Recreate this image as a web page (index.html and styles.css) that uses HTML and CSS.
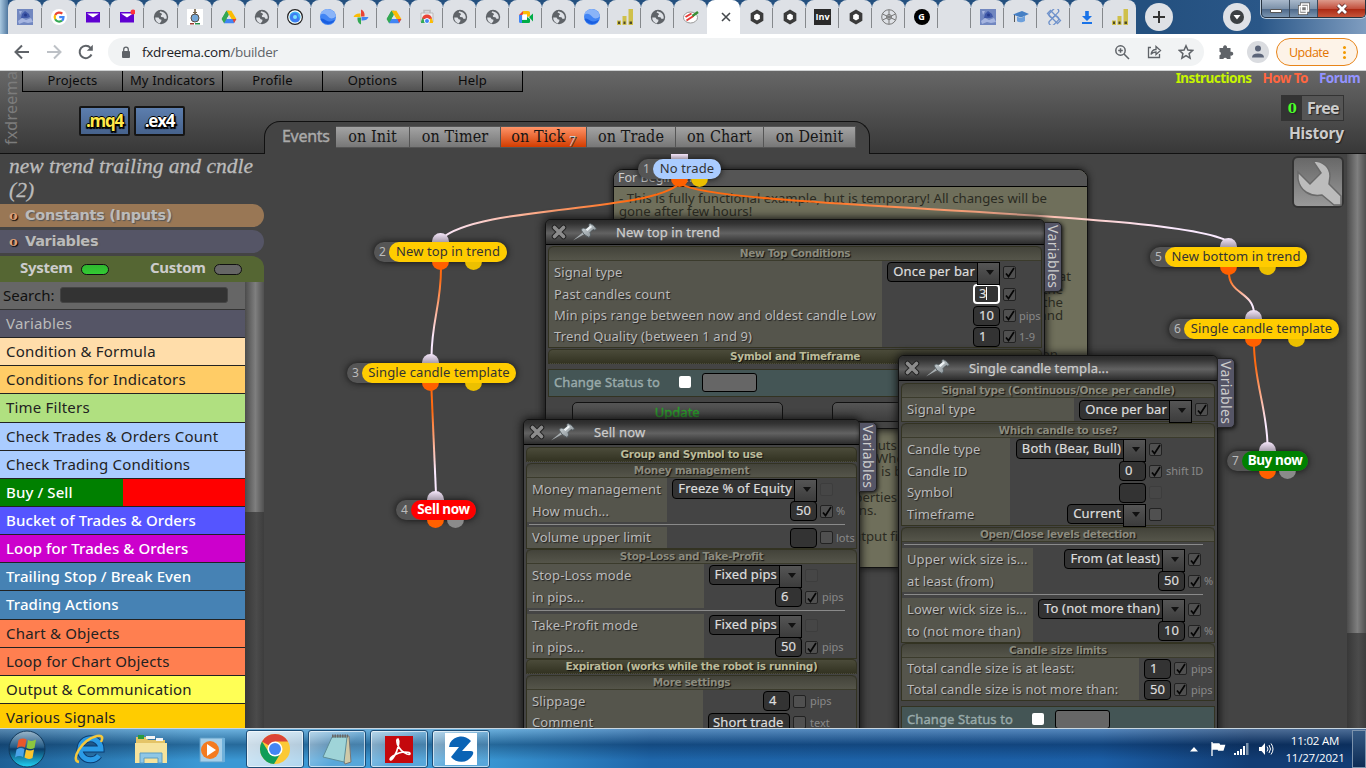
FILE: index.html
```
<!DOCTYPE html>
<html lang="en">
<head>
    <meta charset="UTF-8">
    <title>fxDreema builder</title>
    <link rel="stylesheet" href="styles.css">
</head>
<body>
    <!-- icon sprite -->
    <svg class="sprite" width="0" height="0">
        <defs>
            <linearGradient id="metal" x1="0" y1="0" x2="1" y2="1"><stop offset="0" stop-color="#d5dde0"/><stop offset="1" stop-color="#7d858a"/></linearGradient>
            <linearGradient id="orb" x1="0" y1="0" x2="0" y2="1"><stop offset="0" stop-color="#9db8cc"/><stop offset=".45" stop-color="#235a86"/><stop offset=".5" stop-color="#0b3c68"/><stop offset="1" stop-color="#21d4f5"/></linearGradient>
        </defs>
        <symbol id="globe" viewBox="0 0 16 16"><circle cx="8" cy="8" r="7.2" fill="#5f6368"/><path d="M2.2 8.6h3.3l1.2 1.6 1.8.6-.3 1.6-1.7 2C4 13.7 2 11.500 2.200 8.600zM7.200 2.200l-.6 1.500 1.600.3.800 1.500-1.300 1.300.500 1.200 2.200.3 1.300 1.600 2-.3c.5-3.300-1.600-6.500-6.500-7.400z" fill="#dee1e6"/></symbol>
        <symbol id="photo" viewBox="0 0 16 16"><path fill="#7187c0" d="M0 0h16v16H0z"/><path fill="#3f58a8" d="M5 5l3-3 4 3 1 3-3 1H4z"/><path fill="#a6b5e0" d="M1 12l4-3 4 2 5-2 2 4-5 1-4-1-5 2zM2 2h3l-2 4z"/><circle cx="8.500" cy="6" r="1.500" fill="#263c8c"/></symbol>
        <symbol id="google" viewBox="0 0 16 16"><circle cx="8" cy="8" r="8" fill="#fff"/><g fill="none" stroke-width="2.200"><path stroke="#ea4335" d="M4.200 6A4.600 4.600 0 0 1 11.300 4.700"/><path stroke="#fbbc05" d="M4.200 10.200A4.800 4.800 0 0 1 4.200 6"/><path stroke="#34a853" d="M11 11.700A4.600 4.600 0 0 1 4.200 10.200"/><path stroke="#4285f4" d="M8.200 8.200h4.300c0 1.500-.5 2.700-1.500 3.500"/></g></symbol>
        <symbol id="mail" viewBox="0 0 16 16"><path fill="#5f01d1" d="M1 3h14v10.500H1z"/><path fill="#fff" d="M2 4.500h12L8 8.500z"/></symbol>
        <symbol id="flask" viewBox="0 0 16 16"><path fill="#fff" d="M0 0h16v16H0z"/><path fill="#75644a" d="M7.200 0h1.600v5H7.200zM6 3h4v1H6z"/><circle cx="8" cy="9" r="4" fill="#75a8d8" stroke="#594d42"/><path fill="#a13d35" d="M3 14h4v1.500H3z"/><path fill="#23904b" d="M8 14h5v1.500H8z"/></symbol>
        <symbol id="drive" viewBox="0 0 16 16"><path fill="#34a853" d="M5.400 1.800h2.800L4 14.200.7 10z"/><path fill="#fbbc04" d="M5.400 1.800h5l5 8.200h-5z"/><path fill="#4285f4" d="M3.300 10h12l-2.500 4.200H3z"/><path fill="#34a853" d="M.7 10l2.300 4.200L8 6 5.400 1.800z"/><path fill="#ea4335" d="M11.500 10h3.900l-2.300 3.900z"/><path fill="#dee1e6" d="M8 6l2.400 4H5.600z"/></symbol>
        <symbol id="eye" viewBox="0 0 16 16"><circle cx="8" cy="8" r="7.400" fill="#fff" stroke="#222" stroke-width="1.200"/><circle cx="8" cy="8" r="5.600" fill="#42b4f5"/><path d="M3 9c0-5 5-6 8-4-2 1 3 4 1 7-3 2-7 2-9-3z" fill="#3f7cf2"/><circle cx="8" cy="8" r="2" fill="#7de3fb"/></symbol>
        <symbol id="earth" viewBox="0 0 16 16"><circle cx="8" cy="8" r="8" fill="#4285f4"/><path d="M.3 6C3 3.500 6 5 8 7.500s5 2.500 7.800 0A8 8 0 0 0 5 .6 8 8 0 0 0 .3 6z" fill="#8ab4f8"/><path d="M.5 10c3-2 5.500 3 9 2.500 2-.2 4-1.500 5.500-1.800A8 8 0 0 1 .5 10z" fill="#1a5fe0"/></symbol>
        <symbol id="photos" viewBox="0 0 16 16"><path fill="#ea4335" d="M8 .5v7h3.500Q12 2 8 .5z"/><path fill="#4285f4" d="M15.500 8h-7v3.500Q14 12 15.500 8z"/><path fill="#34a853" d="M8 15.500v-7H4.500Q4 14 8 15.500z"/><path fill="#fbbc04" d="M.5 8h7V4.500Q2 4 .5 8z"/></symbol>
        <symbol id="store" viewBox="0 0 16 16"><path fill="#eee" stroke="#bbb" d="M2 4h12v9H2z"/><path fill="none" stroke="#bbb" stroke-width="1.500" d="M5 4V1.500h6V4"/><path fill="#ea4335" d="M3 10a5 4.500 0 0 1 10 0z"/><path fill="#34a853" d="M2 14c0-3 1-4 2-5l2.500 5z"/><path fill="#fbbc04" d="M14 14c0-3-1-4-2-5l-4 5z"/><circle cx="8" cy="12" r="2.500" fill="#4285f4" stroke="#fff"/></symbol>
        <symbol id="meet" viewBox="0 0 16 16"><path fill="#4285f4" d="M1 6h3v8H2.500Q1 14 1 12.500z"/><path fill="#ea4335" d="M5 2v4H1z"/><path fill="#fbbc04" d="M5 2h5q2 0 2 1.500V7L9 8V5.500H5z"/><path fill="#00ac47" d="M4 11h5V8l3 2v3q0 1-1.500 1H4zM11 8l4-3.500v8z"/><path fill="#fff" d="M4.500 5.500H9v5H4.500z"/></symbol>
        <symbol id="btm" viewBox="0 0 16 16"><path fill="#cfc04a" d="M0 11.500h4V16H0zM5.500 7h4v9h-4zM11.500 0H16v16h-4.500z"/><path fill="#4e4a28" d="M1 12.500h2V15H1zM6.500 12.500h2V15h-2zM12.500 12.500H15V15h-2.500z"/></symbol>
        <symbol id="leaf" viewBox="0 0 16 16"><ellipse cx="7.500" cy="8.500" rx="7" ry="5.500" fill="#fff" stroke="#999"/><path stroke="#e53935" stroke-width="2" fill="none" d="M2.500 8l6-3.500M3.500 11.500l7-4.500"/><path stroke="#3a8e35" stroke-width="2.500" d="M9.500 7L15 3"/></symbol>
        <symbol id="hex" viewBox="0 0 16 16"><path fill="#fff" stroke="#3b3b3b" stroke-width="3.500" d="M8 2.500l4.600 2.700v5.600L8 13.500l-4.600-2.700V5.200z"/></symbol>
        <symbol id="wheel" viewBox="0 0 16 16"><g fill="none" stroke="#777"><circle cx="8" cy="8" r="7.300"/><circle cx="8" cy="8" r="2.500"/><path d="M8 1v14M1.500 5L14.500 11M1.500 11L14.500 5"/></g></symbol>
        <symbol id="hat" viewBox="0 0 16 16"><path fill="#457fc4" d="M0 5.500L9 2l7 3-8 3.500z"/><path fill="#6da0dc" d="M4 7.800v4.500c2 1.500 6 1.200 8-.3V6.800L8 9z"/><path stroke="#555" fill="none" d="M1.500 6v7"/></symbol>
        <symbol id="link" viewBox="0 0 16 16"><g fill="none" stroke="#6f92cb" stroke-width="1.300"><rect x="5" y="-1.500" width="5.500" height="11" rx="2.500" transform="rotate(45 8 4)"/><rect x="5" y="6.500" width="5.500" height="11" rx="2.500" transform="rotate(45 8 12)"/><path d="M1.500 4.500l3-3 10 10-3 3z"/></g></symbol>
        <symbol id="down" viewBox="0 0 16 16"><path fill="#1a73e8" d="M6.200 2h3.600v5H13l-5 5-5-5h3.200zM3 13h10v2H3z"/></symbol>
        <symbol id="tick" viewBox="0 0 13 13"><path d="M3 7.500l2.500 3L11 2" fill="none" stroke="#050505" stroke-width="1.700"/></symbol>
        <symbol id="pin" viewBox="0 0 26 18"><path d="M1 17.500L12.500 8l1.800 2z" fill="#a9b0b3"/><path d="M9 6.500q3-2.500 5-.5l3-2.500q-1-2 1-3 4 1 6.500 5.500-1.500 2-3.500.5l-3 3q2 2.500-1 5Q11 12 9 6.500z" fill="url(#metal)" stroke="#4a5357" stroke-width=".8"/><path d="M13.500 6.500l5-4 1.500 1.500-4.500 4z" fill="#eef3f5"/></symbol>
        <symbol id="close" viewBox="0 0 18 18"><path d="M4.500 4.500l9 9M13.500 4.500l-9 9" stroke="#222" stroke-width="5.500" stroke-linecap="round"/><path d="M4.500 4.500l9 9M13.500 4.500l-9 9" stroke="#8c8c8c" stroke-width="3.600" stroke-linecap="round"/></symbol>
    </svg>

    <div class="tabstrip">
        <div class="tabs">
            <div class="tab wide"><svg><use href="#photo"/></svg></div>
            <div class="tab wide"><svg><use href="#google"/></svg></div>
            <div class="tab wide"><svg><use href="#mail"/></svg></div>
            <div class="tab wide"><svg><use href="#mail"/><circle cx="14" cy="3" r="2.500" fill="#ff333a"/></svg></div>
            <div class="tab wide"><svg><use href="#globe"/></svg></div>
            <div class="tab wide"><svg><use href="#flask"/></svg></div>
            <div class="tab"><svg><use href="#drive"/></svg></div>
            <div class="tab"><svg><use href="#globe"/></svg></div>
            <div class="tab"><svg><use href="#eye"/></svg></div>
            <div class="tab"><svg><use href="#earth"/></svg></div>
            <div class="tab"><svg><use href="#photos"/></svg></div>
            <div class="tab"><svg><use href="#drive"/></svg></div>
            <div class="tab"><svg><use href="#store"/></svg></div>
            <div class="tab"><svg><use href="#globe"/></svg></div>
            <div class="tab"><svg><use href="#globe"/></svg></div>
            <div class="tab"><svg><use href="#meet"/></svg></div>
            <div class="tab"><svg><use href="#globe"/></svg></div>
            <div class="tab"><svg><use href="#earth"/></svg></div>
            <div class="tab"><svg><use href="#btm"/></svg></div>
            <div class="tab"><svg><use href="#globe"/></svg></div>
            <div class="tab before-active"><svg><use href="#leaf"/></svg></div>
            <div class="tab active"><svg><path d="M5 4l8 8M13 4l-8 8" stroke="#45494d" stroke-width="1.600"/></svg></div>
            <div class="tab after-active"><svg><use href="#hex"/></svg></div>
            <div class="tab"><svg><use href="#hex"/></svg></div>
            <div class="tab"><span class="fav-inv">Inv</span></div>
            <div class="tab"><svg><use href="#hex"/></svg></div>
            <div class="tab"><svg><use href="#wheel"/></svg></div>
            <div class="tab"><span class="fav-g">G</span></div>
            <div class="tab"></div>
            <div class="tab"><svg><use href="#photo"/></svg></div>
            <div class="tab"><svg><use href="#hat"/></svg></div>
            <div class="tab"><svg><use href="#link"/></svg></div>
            <div class="tab"><svg><use href="#down"/></svg></div>
            <div class="tab last"><svg><use href="#btm"/></svg></div>
        </div>
        <div class="round-btn"><svg width="28" height="28"><path d="M14 8v12M8 14h12" stroke="#333" stroke-width="2"/></svg></div>
        <div class="round-btn search"><svg width="28" height="28"><circle cx="14" cy="14" r="7" fill="#3c4043"/><path d="M10.500 12h7L14 16.500z" fill="#fff"/></svg></div>
        <div class="win-buttons">
            <span class="wb"><svg width="14" height="12"><path d="M1.500 6.500h11v3h-11z" fill="#fff" stroke="#555"/></svg></span>
            <span class="wb"><svg width="14" height="14"><path d="M4.500 2h7v7h-7zM2.500 4.500h7v7h-7z" fill="none" stroke="#555" stroke-width="3"/><path d="M4.500 2h7v7h-7zM2.500 4.500h7v7h-7z" fill="#777" stroke="#fff" stroke-width="1.500"/></svg></span>
            <span class="wb red"><svg width="14" height="12"><path d="M3 2l8 8M11 2l-8 8" stroke="#5b2a2a" stroke-width="4.500"/><path d="M3 2l8 8M11 2l-8 8" stroke="#fff" stroke-width="2.800"/></svg></span>
        </div>
    </div>

    <div class="toolbar">
        <svg class="nav" viewBox="0 0 16 16"><path d="M15 8H2M8 1.500L1.500 8 8 14.500" fill="none" stroke="#5f6368" stroke-width="2"/></svg>
        <svg class="nav" viewBox="0 0 16 16"><path d="M1 8h13M8 1.500L14.500 8 8 14.500" fill="none" stroke="#bdc1c6" stroke-width="2"/></svg>
        <svg class="nav" viewBox="0 0 16 16"><path d="M13.500 10.500A6.200 6.200 0 1 1 12.500 3.800" fill="none" stroke="#5f6368" stroke-width="2"/><path d="M14.800.8v6h-6z" fill="#5f6368"/></svg>
        <div class="omnibox">
            <svg class="lock" viewBox="0 0 10 13"><rect x="1" y="5" width="8" height="7" rx="1" fill="#5f6368"/><path d="M2.700 5V3.500a2.300 2.300 0 0 1 4.600 0V5" fill="none" stroke="#5f6368" stroke-width="1.300"/></svg>
            <span class="url">fxdreema.com<em>/builder</em></span>
            <svg class="oi" viewBox="0 0 16 16"><g fill="none" stroke="#5f6368" stroke-width="1.500"><circle cx="6.500" cy="6.500" r="4.700"/><path d="M10 10l5 5M4.200 6.500h4.600M6.500 4.200v4.600"/></g></svg>
            <svg class="oi" viewBox="0 0 16 16"><g fill="none" stroke="#5f6368" stroke-width="1.300"><path d="M5 3.500H2.500v10h11V10"/><path d="M5 10.500c.5-3.500 2-5 5-5V2.500l4.500 4-4.500 4V8C7.500 8 6 9 5 10.500z"/></g></svg>
            <svg class="oi" viewBox="0 0 16 16"><path d="M8 1.800l1.900 4.300 4.700.4-3.500 3.100 1 4.600L8 11.700l-4.100 2.500 1-4.600L1.400 6.500l4.700-.4z" fill="none" stroke="#5f6368" stroke-width="1.500"/></svg>
        </div>
        <svg class="puzzle" viewBox="0 0 16 16"><path d="M1.500 4h3.700a2 2 0 1 1 3.700 0h3.600v3.800a2 2 0 1 1 0 3.700V15H9a2 2 0 0 0-3.700 0H1.500v-3.700a1.800 1.800 0 0 0 0-3.500z" fill="#5f6368"/></svg>
        <svg class="avatar" viewBox="0 0 22 22"><circle cx="11" cy="11" r="11" fill="#dadce0"/><circle cx="11" cy="7.500" r="3" fill="#5b6478"/><path d="M5 16.500q0-4 6-4t6 4z" fill="#5b6478"/></svg>
        <div class="update"><span>Update</span><i></i></div>
    </div>

    <div class="app">
        <div class="header">
            <div class="brand">fxdreema</div>
            <div class="header-left">
                <div class="menu"><span>Projects</span><span>My Indicators</span><span>Profile</span><span>Options</span><span>Help</span></div>
                <div class="exports"><span class="export yellow">.mq4</span><span class="export">.ex4</span></div>
            </div>
            <div class="account">
                <div class="links"><span class="l1">Instructions</span><span class="l2">How To</span><span class="l3">Forum</span></div>
                <div class="plan"><b>0</b><span>Free</span></div>
                <div class="history">History</div>
            </div>
            <div class="events">
                <span class="events-title">Events</span>
                <span class="ev" style="width:74px">on Init</span>
                <span class="ev" style="width:91px">on Timer</span>
                <span class="ev on" style="width:86px">on Tick<sub>7</sub></span>
                <span class="ev" style="width:89px">on Trade</span>
                <span class="ev" style="width:88px">on Chart</span>
                <span class="ev" style="width:92px">on Deinit</span>
            </div>
        </div>

        <div class="main">
            <div class="sidebar">
                <div class="project">new trend trailing and cndle (2)</div>
                <div class="side-bar brown"><b>o</b>Constants (Inputs)</div>
                <div class="side-bar slate"><b>o</b>Variables</div>
                <div class="sources"><span>System</span><i class="led on"></i><span class="custom">Custom</span><i class="led"></i></div>
                <div class="side-body">
                    <div class="side-list">
                        <div class="search-row">Search:<span class="search-box"></span></div>
                        <div class="cat c-var">Variables</div>
                        <div class="cat c-cond">Condition &amp; Formula</div>
                        <div class="cat c-ind">Conditions for Indicators</div>
                        <div class="cat c-time">Time Filters</div>
                        <div class="cat c-check">Check Trades &amp; Orders Count</div>
                        <div class="cat c-check">Check Trading Conditions</div>
                        <div class="cat c-buy">Buy / Sell</div>
                        <div class="cat c-bucket">Bucket of Trades &amp; Orders</div>
                        <div class="cat c-loop">Loop for Trades &amp; Orders</div>
                        <div class="cat c-steel">Trailing Stop / Break Even</div>
                        <div class="cat c-steel">Trading Actions</div>
                        <div class="cat c-coral">Chart &amp; Objects</div>
                        <div class="cat c-coral">Loop for Chart Objects</div>
                        <div class="cat c-out">Output &amp; Communication</div>
                        <div class="cat c-sig">Various Signals</div>
                    </div>
                    <div class="scroll"><div class="thumb side-thumb"></div></div>
                </div>
            </div>

            <!-- block diagram: everything on it is placed freely -->
            <div class="canvas">
                <div class="note">
                    <div class="note-head">For Beginners</div>
                    <div class="note-body">
                        <p>- This is fully functional example, but is temporary! All changes will be</p>
                        <p>gone after few hours!</p>
                        <p></p><p></p><p></p><p></p>
                        <p class="end">at</p>
                        <p class="end1">the</p>
                        <p class="end1">the</p>
                        <p class="end1">and</p>
                        <p></p><p></p>
                        <p class="end2">on</p>
                        <p></p><p></p><p></p><p></p><p></p><p></p>
                        <p class="mid">inputs</p>
                        <p class="mid1">. When</p>
                        <p class="mid2">is based</p>
                        <p></p>
                        <p class="mid3">properties</p>
                        <p class="mid4">actions.</p>
                        <p></p>
                        <p class="mid5">output file</p>
                    </div>
                </div>

                <svg class="wires" width="1082" height="574" viewBox="264 154 1082 574">
                    <defs>
                        <linearGradient id="w1" gradientUnits="userSpaceOnUse" x1="678" y1="0" x2="441" y2="0"><stop offset=".2" stop-color="#ff6a10"/><stop offset="1" stop-color="#fbeaff"/></linearGradient>
                        <linearGradient id="w2" gradientUnits="userSpaceOnUse" x1="680" y1="0" x2="1229" y2="0"><stop offset=".2" stop-color="#ff6a10"/><stop offset=".9" stop-color="#fbeaff"/></linearGradient>
                        <linearGradient id="w3" gradientUnits="userSpaceOnUse" x1="0" y1="270" x2="0" y2="354"><stop offset=".1" stop-color="#ff6a10"/><stop offset=".8" stop-color="#fbeaff"/></linearGradient>
                        <linearGradient id="w4" gradientUnits="userSpaceOnUse" x1="0" y1="391" x2="0" y2="492"><stop offset=".2" stop-color="#ff6a10"/><stop offset=".8" stop-color="#fbeaff"/></linearGradient>
                        <linearGradient id="w5" gradientUnits="userSpaceOnUse" x1="0" y1="275" x2="0" y2="311"><stop offset=".1" stop-color="#ff6a10"/><stop offset=".8" stop-color="#fbeaff"/></linearGradient>
                        <linearGradient id="w6" gradientUnits="userSpaceOnUse" x1="0" y1="346" x2="0" y2="443"><stop offset=".2" stop-color="#ff6a10"/><stop offset=".8" stop-color="#fbeaff"/></linearGradient>
                    </defs>
                    <g fill="none" stroke-width="2">
                        <path stroke="url(#w1)" d="M679 184C645 213 480 205 441 239"/>
                        <path stroke="url(#w2)" d="M681 184C720 209 1180 210 1229 242"/>
                        <path stroke="url(#w3)" d="M441 268C441 305 432 320 431.500 356"/>
                        <path stroke="url(#w4)" d="M431.500 390L436 494"/>
                        <path stroke="url(#w5)" d="M1229 273C1229 294 1253 292 1254 313"/>
                        <path stroke="url(#w6)" d="M1254 344C1254 380 1267 410 1267.500 445"/>
                    </g>
                </svg>

                <div class="node n1"><i class="in"></i><span class="num">1</span><span class="name">No trade</span><i class="out"></i><i class="alt"></i></div>
                <div class="node n2"><i class="in"></i><span class="num">2</span><span class="name">New top in trend</span><i class="out"></i><i class="alt"></i></div>
                <div class="node n3"><i class="in"></i><span class="num">3</span><span class="name">Single candle template</span><i class="out"></i><i class="alt"></i></div>
                <div class="node n4"><i class="in"></i><span class="num">4</span><span class="name">Sell now</span><i class="out"></i><i class="alt"></i></div>
                <div class="node n5"><i class="in"></i><span class="num">5</span><span class="name">New bottom in trend</span><i class="out"></i><i class="alt"></i></div>
                <div class="node n6"><i class="in"></i><span class="num">6</span><span class="name">Single candle template</span><i class="out"></i><i class="alt"></i></div>
                <div class="node n7"><i class="in"></i><span class="num">7</span><span class="name">Buy now</span><i class="out"></i><i class="alt"></i></div>

                <div class="window win-top">
                    <div class="vars">Variables</div>
                    <div class="titlebar"><svg class="x"><use href="#close"/></svg><svg class="pin"><use href="#pin"/></svg><span>New top in trend</span></div>
                    <div class="section s-top">
                        <h4>New Top Conditions</h4>
                        <div class="row"><label>Signal type</label><span class="sel">Once per bar</span><span class="chk"><svg><use href="#tick"/></svg></span><em></em></div>
                        <div class="row"><label>Past candles count</label><span class="inp focus">3</span><span class="chk"><svg><use href="#tick"/></svg></span><em></em></div>
                        <div class="row short"><label>Min pips range between now and oldest candle Low</label><span class="inp">10</span><span class="chk"><svg><use href="#tick"/></svg></span><em>pips</em></div>
                        <div class="row short"><label>Trend Quality (between 1 and 9)</label><span class="inp">1</span><span class="chk"><svg><use href="#tick"/></svg></span><em>1-9</em></div>
                    </div>
                    <h4 class="fold">Symbol and Timeframe</h4>
                    <div class="status">Change Status to<i class="box"></i><i class="field"></i></div>
                    <div class="buttons"><span class="green">Update</span><span></span></div>
                </div>

                <div class="window win-sell">
                    <div class="vars">Variables</div>
                    <div class="titlebar"><svg class="x"><use href="#close"/></svg><svg class="pin"><use href="#pin"/></svg><span>Sell now</span></div>
                    <h4 class="fold">Group and Symbol to use</h4>
                    <div class="section s-money">
                        <h4>Money management</h4>
                        <div class="row"><label>Money management</label><span class="sel">Freeze % of Equity</span><span class="chk faint"></span><em></em></div>
                        <div class="row"><label>How much...</label><span class="inp">50</span><span class="chk"><svg><use href="#tick"/></svg></span><em>%</em></div>
                        <hr>
                        <div class="row short"><label>Volume upper limit</label><span class="inp"></span><span class="chk"></span><em>lots</em></div>
                    </div>
                    <div class="section s-stop">
                        <h4>Stop-Loss and Take-Profit</h4>
                        <div class="row"><label>Stop-Loss mode</label><span class="sel">Fixed pips</span><span class="chk faint"></span><em></em></div>
                        <div class="row"><label>in pips...</label><span class="inp">6</span><span class="chk"><svg><use href="#tick"/></svg></span><em>pips</em></div>
                        <hr>
                        <div class="row"><label>Take-Profit mode</label><span class="sel">Fixed pips</span><span class="chk faint"></span><em></em></div>
                        <div class="row"><label>in pips...</label><span class="inp">50</span><span class="chk"><svg><use href="#tick"/></svg></span><em>pips</em></div>
                    </div>
                    <h4 class="fold">Expiration (works while the robot is running)</h4>
                    <div class="section s-more">
                        <h4>More settings</h4>
                        <div class="row"><label>Slippage</label><span class="inp">4</span><span class="chk"></span><em>pips</em></div>
                        <div class="row short"><label>Comment</label><span class="inp text">Short trade</span><span class="chk"></span><em>text</em></div>
                    </div>
                </div>

                <div class="window win-candle">
                    <div class="vars">Variables</div>
                    <div class="titlebar"><svg class="x"><use href="#close"/></svg><svg class="pin"><use href="#pin"/></svg><span>Single candle templa...</span></div>
                    <div class="section s-signal">
                        <h4>Signal type (Continuous/Once per candle)</h4>
                        <div class="row tall"><label>Signal type</label><span class="sel">Once per bar</span><span class="chk"><svg><use href="#tick"/></svg></span><em></em></div>
                    </div>
                    <div class="section s-which">
                        <h4>Which candle to use?</h4>
                        <div class="row"><label>Candle type</label><span class="sel">Both (Bear, Bull)</span><span class="chk"><svg><use href="#tick"/></svg></span><em></em></div>
                        <div class="row"><label>Candle ID</label><span class="inp">0</span><span class="chk"><svg><use href="#tick"/></svg></span><em>shift ID</em></div>
                        <div class="row short"><label>Symbol</label><span class="inp"></span><span class="chk faint"></span><em></em></div>
                        <div class="row"><label>Timeframe</label><span class="sel">Current</span><span class="chk"></span><em></em></div>
                    </div>
                    <div class="section s-open">
                        <h4>Open/Close levels detection</h4>
                        <hr>
                        <div class="row"><label>Upper wick size is...</label><span class="sel">From (at least)</span><span class="chk"><svg><use href="#tick"/></svg></span><em></em></div>
                        <div class="row"><label>at least (from)</label><span class="inp">50</span><span class="chk"><svg><use href="#tick"/></svg></span><em>%</em></div>
                        <hr>
                        <div class="row"><label>Lower wick size is...</label><span class="sel">To (not more than)</span><span class="chk"><svg><use href="#tick"/></svg></span><em></em></div>
                        <div class="row"><label>to (not more than)</label><span class="inp">10</span><span class="chk"><svg><use href="#tick"/></svg></span><em>%</em></div>
                    </div>
                    <div class="section s-limits">
                        <h4>Candle size limits</h4>
                        <div class="row short"><label>Total candle size is at least:</label><span class="inp">1</span><span class="chk"><svg><use href="#tick"/></svg></span><em>pips</em></div>
                        <div class="row short"><label>Total candle size is not more than:</label><span class="inp">50</span><span class="chk"><svg><use href="#tick"/></svg></span><em>pips</em></div>
                    </div>
                    <div class="status">Change Status to<i class="box"></i><i class="field"></i></div>
                </div>

                <div class="wrench"><svg width="48" height="48"><path d="M19 3C30 3 36 10 36 18l-1 8 12 12v9h-7L28 37C16 39 6 33 4 21v-7l12 12 11-11z" fill="#bcbcbc" stroke="#6a6a6a" stroke-width="1.500"/></svg></div>
            </div>
            <div class="scroll"><div class="thumb main-thumb"></div></div>
        </div>
    </div>

    <div class="taskbar">
        <svg class="start" viewBox="0 0 38 38"><circle cx="19" cy="19" r="18" fill="url(#orb)" stroke="#123a5c"/><path d="M10.500 10q4-2.500 8-.5l-1.500 8q-4-2-8 .5z" fill="#e8582c"/><path d="M20 10q4 2 8-.5l-1.500 8.500q-4 2-8 0z" fill="#8cc63f"/><path d="M8.500 19.500q4-2.500 8-.5l-1.500 8q-4-2-8 .5z" fill="#4aa3e8"/><path d="M18 19.500q4 2 8 0L24.500 28q-4 2-8-.5z" fill="#fbc52d"/></svg>
        <svg class="ti" viewBox="0 0 34 34"><g fill="none"><path d="M27 23.500A10.500 10.500 0 1 1 29 17H10" stroke="#0b3d73" stroke-width="7"/><path d="M27 23.500A10.500 10.500 0 1 1 29 17H10" stroke="#2b9be6" stroke-width="5"/><path d="M7 30C-2 29 9 8 25 4c6-1 6 2 4 6" stroke="#f5c83c" stroke-width="2.500"/></g></svg>
        <svg class="ti" viewBox="0 0 34 34"><path d="M2 5h10l2 3h17v22H2z" fill="#e4c467"/><path d="M4 3h6v4H4z" fill="#2a9a3f"/><path d="M12 4h9v3h-9zM22 6h7v3h-7z" fill="#f4f4f4"/><path d="M1 11h32v20H1z" fill="#f6e39c"/><path d="M6 31v-10h22v10h-4v-5H10v5z" fill="#8fc7e6" stroke="#5c9ec4"/></svg>
        <svg class="ti" viewBox="0 0 34 34"><path d="M4 6h24v24H4z" fill="#a6cfe9" stroke="#5e9fc9"/><path d="M26 6h3v24h-3z" fill="#6fb0da"/><circle cx="14" cy="18" r="9" fill="#f47b20"/><path d="M11 12l9 6-9 6z" fill="#fff"/></svg>
        <div class="task current"><svg viewBox="0 0 32 32"><circle cx="16" cy="16" r="15" fill="#fbc936"/><path d="M16 16L3 8.500A15 15 0 0 1 29 8.500H16z" fill="#db4437"/><path d="M3 8.500A15 15 0 0 0 15 31l7-11.500-12 0z" fill="#0f9d58"/><circle cx="16" cy="16" r="7.500" fill="#fff"/><circle cx="16" cy="16" r="6" fill="#4285f4"/></svg></div>
        <div class="task"><svg viewBox="0 0 32 32"><path d="M12 3h16l2 26-6 2z" fill="#cfc9a8" stroke="#777"/><path d="M11 4h15l-3 25-21-5z" fill="#9fd4d8" stroke="#5e8d98"/><path d="M11 3h16" stroke="#666" stroke-width="3" stroke-dasharray="1.500 1"/></svg></div>
        <div class="task"><svg viewBox="0 0 32 32"><path d="M2 3h28v27H2z" fill="#c4080d"/><path d="M15 6q-2 0-.5 5.500Q17 18 24 21q3 1 3-.5t-5-1.500q-6 0-12 4-4 3-2.500 4 2 0 6-8Q17 9 15 6z" fill="none" stroke="#fff" stroke-width="1.700"/></svg></div>
        <div class="task"><svg viewBox="0 0 32 32"><path d="M0 0h32v32H0z" fill="#fff"/><path d="M5 10A13 13 0 0 1 26 8L17 18h9q4 0 1 5A13 13 0 0 1 6 24l8-10H4z" fill="#0a63b5"/></svg></div>
        <div class="tray">
            <svg width="10" height="8"><path d="M1 6.500L5 2l4 4.500z" fill="#fff"/></svg>
            <svg class="flag" width="16" height="16"><path d="M2 1v14M3 3h6l1 1.500h4.500L13 9H8.500L8 8H3z" stroke="#fff" stroke-width="1.300" fill="#fff"/></svg>
            <svg width="16" height="14"><path d="M0 11h2v2H0zM3 9h2v4H3zM6 7h2v6H6zM9 4h2v9H9z" fill="#fff"/><path d="M12 1h2.500v12H12z" fill="#7d94ad"/></svg>
            <svg width="16" height="16"><path d="M1 6h2.500L7 2v12l-3.500-4H1z" fill="#fff"/><path d="M9 5.500q2 2.500 0 5M11 4q3 4 0 8M13 2.500q4 5.500 0 11" fill="none" stroke="#fff"/></svg>
            <div class="clock">11:02 AM<br>11/27/2021</div>
            <div class="peek"></div>
        </div>
    </div>
</body>
</html>
```
FILE: styles.css
```
* {
    box-sizing: border-box;
}
body {
    margin: 0;
    width: 1366px;
    height: 768px;
    overflow: hidden;
    display: flex;
    flex-direction: column;
    font-family: "Noto Sans", sans-serif;
    background: #444;
}
.sprite {
    position: absolute;
}
i, em {
    font-style: normal;
}

/* browser */
.tabstrip {
    height: 34px;
    display: flex;
    flex-shrink: 0;
    padding-left: 8px;
    background: linear-gradient(90deg, #a9c8e0 0, #24507f 12px, #24507f 1150px, #2a5788 1260px, #7f9dc0 1366px);
}
.tabs {
    display: flex;
    background: #24507f;
}
.tab {
    width: 33px;
    height: 34px;
    background: #dee1e6;
    border-radius: 8px 8px 0 0;
    display: flex;
    align-items: center;
    justify-content: center;
    background-image: linear-gradient(#85888c, #85888c);
    background-size: 1px 20px;
    background-position: right 8px;
    background-repeat: no-repeat;
}
.tab.wide {
    width: 34px;
}
.tab svg {
    width: 16px;
    height: 16px;
}
.tab.active {
    background: #fff;
    padding-left: 2px;
}
.tab.before-active {
    background: #dee1e6;
}
.tab.last {
    background-image: none;
}
.fav-inv, .fav-g {
    width: 17px;
    height: 16px;
    background: #2a2a2a;
    color: #fff;
    font: bold 9px/16px "Open Sans", sans-serif;
    text-align: center;
}
.fav-g {
    width: 16px;
    border-radius: 50%;
    background: #000;
}
.round-btn {
    width: 28px;
    height: 28px;
    margin: 3px 0 0 9px;
    border-radius: 50%;
    background: #dee1e6;
}
.round-btn.search {
    margin-left: 50px;
}
.win-buttons {
    display: flex;
    height: 18px;
    margin-left: 10px;
    border: 1px solid #26323f;
    border-top: 0;
    border-radius: 0 0 5px 5px;
    overflow: hidden;
    box-shadow: 0 0 0 1px #b9cadb;
}
.wb {
    width: 28px;
    display: flex;
    align-items: center;
    justify-content: center;
    background: linear-gradient(#a9b9cb, #7d92aa 50%, #4b6687 51%, #7a94b0);
    border-right: 1px solid #3a4a5c;
}
.wb.red {
    width: 47px;
    border: 0;
    background: linear-gradient(#dd9a8b, #c3513f 50%, #a92611 51%, #c6553a);
}
.toolbar {
    height: 36px;
    flex-shrink: 0;
    display: flex;
    align-items: center;
    background: #fff;
    padding-left: 14px;
}
.nav {
    width: 16px;
    height: 16px;
    margin-right: 16px;
}
.omnibox {
    width: 1096px;
    height: 28px;
    margin-left: -2px;
    padding: 0 9px 0 13px;
    border-radius: 14px;
    background: #f1f3f4;
    display: flex;
    align-items: center;
}
.lock {
    width: 10px;
    height: 13px;
}
.url {
    flex: 1;
    margin-left: 11px;
    font: 13.500px "Open Sans", sans-serif;
    letter-spacing: -.25px;
    color: #202124;
}
.url em {
    color: #5f6368;
}
.oi {
    width: 16px;
    height: 16px;
    margin-left: 16px;
}
.oi:last-child {
    margin-right: 1px;
}
.puzzle {
    width: 16px;
    height: 16px;
    margin-left: 14px;
}
.avatar {
    width: 22px;
    height: 22px;
    margin-left: 13px;
}
.update {
    width: 82px;
    height: 28px;
    margin-left: 7px;
    border: 1px solid #e8851a;
    border-radius: 14px;
    background: #fdf3e8;
    color: #e37400;
    font: 12.500px "Open Sans", sans-serif;
    letter-spacing: -.5px;
    display: flex;
    align-items: center;
    justify-content: space-between;
    padding: 0 11px 0 12px;
}
.update i {
    width: 3px;
    height: 3px;
    border-radius: 50%;
    background: #f29900;
    box-shadow: 0 -5px #f29900, 0 5px #f29900;
}

/* app header */
.app {
    height: 658px;
    border-top: 1px solid #cfd1d2;
    display: flex;
    flex-direction: column;
}
.header {
    height: 83px;
    position: relative;
    display: flex;
    flex-shrink: 0;
    background: linear-gradient(#676767, #383838);
    border-bottom: 1px solid #111;
}
.brand {
    width: 22px;
    writing-mode: vertical-rl;
    transform: rotate(180deg);
    text-align: right;
    color: #7c7c7c;
    font-size: 16px;
    line-height: 22px;
    letter-spacing: .3px;
}
.header-left {
    width: 502px;
}
.menu {
    display: flex;
    height: 21px;
    border-left: 1px solid #000;
}
.menu span {
    width: 100px;
    border-right: 1px solid #000;
    border-bottom: 1px solid #000;
    background: linear-gradient(#7b7b7b, #515151);
    color: #0b0b0b;
    font-size: 13px;
    letter-spacing: .15px;
    line-height: 19px;
    text-align: center;
}
.exports {
    display: flex;
    gap: 4px;
    padding: 14px 0 0 57px;
}
.export {
    width: 51px;
    height: 30px;
    border: 2px solid #151515;
    border-radius: 2px;
    background: linear-gradient(#5c7eae, #46628c);
    color: #fff;
    font: bold 17px/25px "Open Sans", sans-serif;
    letter-spacing: -1.2px;
    text-align: center;
    text-shadow: 1px 0 #000, -1px 0 #000, 0 1px #000, 0 -1px #000, 2px 2px 1px #000, -1px 2px 1px #000;
}
.export.yellow {
    color: #ffe94a;
}
.account {
    margin-left: auto;
    padding-right: 6px;
    display: flex;
    flex-direction: column;
    align-items: flex-end;
    font-weight: bold;
}
.links {
    display: flex;
    gap: 11px;
    font-size: 13.500px;
    line-height: 15px;
    letter-spacing: -.55px;
}
.l1 { color: #c6f500; }
.l2 { color: #ff6640; }
.l3 { color: #9393ff; }
.plan {
    width: 63px;
    height: 26px;
    margin: 9px 16px 0 0;
    border: 1px solid #333;
    background: #555;
    display: flex;
    color: #ccc;
    font-size: 16px;
    letter-spacing: -.7px;
    line-height: 24px;
    text-shadow: 1px 1px 1px #222;
}
.plan b {
    width: 20px;
    margin-right: 5px;
    background: #333;
    color: #4aff2a;
    font: bold 13px/25px "DejaVu Serif", serif;
    text-align: center;
}
.history {
    margin: 2px 16px 0 0;
    color: #ccc;
    font-size: 15.500px;
    line-height: 21px;
    letter-spacing: -.2px;
    text-shadow: 1px 1px 1px #222;
}
.events {
    position: absolute;
    left: 264px;
    top: 50px;
    width: 606px;
    height: 33px;
    padding: 4px 0 0 17px;
    display: flex;
    background: #444;
    border: 1px solid #111;
    border-bottom: 0;
    border-radius: 16px 16px 0 0;
}
.events-title {
    width: 54px;
    color: #aaa;
    font-size: 16px;
    line-height: 20px;
    letter-spacing: -.3px;
    -webkit-text-stroke: .4px #aaa;
}
.ev {
    height: 22px;
    background: linear-gradient(#a3a3a3, #777);
    border: 1px solid #555;
    border-left-width: 0;
    color: #161616;
    font: 16px/19px "DejaVu Serif Condensed", "DejaVu Serif", serif;
    font-stretch: condensed;
    letter-spacing: .1px;
    text-align: center;
    white-space: nowrap;
}
.ev.on {
    background: linear-gradient(#ff9468, #d23c00);
}
.ev sub {
    font-size: 13px;
    font-style: italic;
    line-height: 10px;
    vertical-align: -4px;
    margin-left: 3px;
    color: #ccc;
    text-shadow: 1px 1px #333;
}

/* sidebar */
.main {
    display: flex;
    height: 574px;
}
.sidebar {
    width: 264px;
    height: 574px;
    overflow: hidden;
    display: flex;
    flex-direction: column;
    flex-shrink: 0;
}
.project {
    height: 50px;
    flex-shrink: 0;
    padding: 0 5px 0 9px;
    color: #bbb;
    font: italic 21.500px/24px "Liberation Serif", serif;
    -webkit-text-stroke: .3px #bbb;
}
.side-bar {
    height: 23px;
    margin-bottom: 3px;
    flex-shrink: 0;
    padding-left: 9px;
    border-radius: 0 12px 12px 0;
    color: #bbb;
    font: bold 14.500px/23px "DejaVu Sans", sans-serif;
    letter-spacing: -.3px;
    text-shadow: 1px 1px 1px #555;
}
.side-bar b {
    display: inline-block;
    width: 16px;
    color: #dc9f78;
    text-shadow: 1px 1px 1px #000;
    font-size: 13px;
    font-family: "DejaVu Serif", serif;
}
.brown { background: #997755; }
.slate { background: #555566; }
.sources {
    height: 26px;
    flex-shrink: 0;
    padding-left: 20px;
    border-radius: 0 12px 0 0;
    display: flex;
    align-items: center;
    background: #556633;
    color: #ccc;
    font-weight: bold;
    font-size: 15px;
    letter-spacing: -.3px;
}
.sources span {
    width: 61px;
    line-height: 22px;
    height: 26px;
}
.sources .custom {
    width: 64px;
    margin-left: 41px;
}
.led {
    width: 28px;
    height: 11px;
    border: 1px solid #111;
    border-radius: 6px;
    background: #666;
}
.led.on {
    background: linear-gradient(#2fb72f, #3c3);
}
.side-body {
    flex: 1;
    display: flex;
}
.side-list {
    width: 245px;
}
.search-row {
    height: 28px;
    background: #666;
    border-bottom: 1px solid #333;
    padding: 0 0 2px 3px;
    font-size: 15px;
    color: #111;
    display: flex;
    align-items: center;
}
.search-box {
    width: 168px;
    height: 16px;
    margin-left: 5px;
    border-radius: 3px;
    background: #333;
    border: 1px solid #444;
}
.cat {
    height: 28.150px;
    padding-left: 6px;
    border-bottom: 1px solid #222;
    color: #222;
    font-size: 15px;
    letter-spacing: .2px;
    line-height: 27px;
    white-space: nowrap;
}
.c-var { background: #555566; color: #bbb; }
.c-cond { background: #ffddaa; }
.c-ind { background: #ffcc66; }
.c-time { background: #b0e080; }
.c-check { background: #aaccff; }
.c-buy { background: linear-gradient(90deg, #008000 50%, #f00 50%); color: #fff; }
.c-bucket { background: #5555ff; color: #fff; }
.c-loop { background: #cc00cc; color: #fff; }
.c-steel { background: #4682b4; color: #fff; }
.c-coral { background: #ff7f50; }
.c-out { background: #ffff55; }
.c-sig { background: #ffcc00; }
.c-bucket, .c-loop, .c-steel, .c-buy { font-weight: 500; letter-spacing: .1px; }
.scroll {
    width: 19px;
    background: linear-gradient(90deg, #383838, #4b4b4b 60%, #3d3d3d);
}
.thumb {
    background: linear-gradient(90deg, #4c4c4c, #7f7f7f 55%, #505050);
}
.side-thumb { height: 230px; }
.main-thumb { height: 479px; }

/* canvas */
.canvas {
    position: relative;
    width: 1083px;
    height: 574px;
    overflow: hidden;
    background: #444;
}
.note {
    position: absolute;
    left: 349px;
    top: 15px;
    width: 475px;
    height: 399px;
    border: 1px solid #111;
    border-radius: 10px 10px 0 0;
    background: #6f6f5b;
    box-shadow: 0 0 7px #111;
    overflow: hidden;
}
.note-head {
    height: 17px;
    padding-left: 4px;
    background: #555;
    border-bottom: 1px solid #000;
    color: #ccc;
    font-size: 12.500px;
    line-height: 16px;
}
.note-body {
    padding: 4px 5px;
    color: #2b2b22;
    font-size: 13.200px;
}
.note p {
    margin: 0;
    height: 13px;
    line-height: 14px;
    white-space: nowrap;
}
.note .end { padding-right: 11px; text-align: right; }
.note .end1 { padding-right: 19px; text-align: right; }
.note .end2 { padding-right: 24px; text-align: right; }
.note .mid { padding-left: 239px; }
.note .mid1 { padding-left: 250px; }
.note .mid2 { padding-left: 262px; }
.note .mid3 { padding-left: 214px; }
.note .mid4 { padding-left: 210px; }
.note .mid5 { padding-left: 226px; }
.wires {
    position: absolute;
    left: 0;
    top: 0;
}
.node {
    position: absolute;
    height: 20px;
    display: flex;
    border-radius: 10px;
    background: #555;
    box-shadow: 0 0 7px #111;
}
.num {
    width: 15px;
    padding-left: 5px;
    color: #bbb;
    font-size: 12px;
    line-height: 19px;
}
.name {
    z-index: 1;
    flex: 1;
    border-radius: 10px;
    background: #ffcc00;
    color: #333;
    font-size: 13px;
    letter-spacing: .1px;
    line-height: 19px;
    text-align: center;
    white-space: nowrap;
}
.node i {
    position: absolute;
    width: 17px;
    height: 9px;
}
.node .in {
    top: -9px;
    background: linear-gradient(#f5e6fa, #a79dac);
    border-radius: 9px 9px 0 0;
}
.node .out, .node .alt {
    bottom: -8px;
    background: #ff6000;
    border-radius: 0 0 9px 9px;
}
.node .alt {
    background: #ecc000;
}
.n1 { left: 374px; top: 5px; width: 83px; }
.n1 .in { top: -5px; height: 5px; border-radius: 0; }
.n1 .in, .n1 .out { left: 33px; }
.n1 .alt { left: 53px; }
.n1 .name { background: #aaccff; }
.n2 { left: 110px; top: 88px; width: 133px; }
.n2 .in, .n2 .out { left: 58px; }
.n2 .alt { left: 91px; }
.n3 { left: 83px; top: 209px; width: 169px; }
.n3 .in, .n3 .out { left: 75px; }
.n3 .alt { left: 118px; }
.n4 { left: 132px; top: 346px; width: 80px; }
.n4 .in, .n4 .out { left: 31px; }
.n4 .alt { left: 51px; }
.n5 { left: 886px; top: 93px; width: 157px; }
.n5 .in, .n5 .out { left: 70px; }
.n5 .alt { left: 109px; }
.n6 { left: 905px; top: 165px; width: 170px; }
.n6 .in, .n6 .out { left: 76px; }
.n6 .alt { left: 119px; }
.n7 { left: 963px; top: 297px; width: 81px; }
.n7 .in, .n7 .out { left: 32px; }
.n7 .alt { left: 52px; }
.n4 .name, .n7 .name { color: #fff; font-size: 13.500px; font-weight: bold; letter-spacing: -.4px; }
.n4 .name { background: #f00; }
.n7 .name { background: #008000; }
.n4 .alt, .n7 .alt { background: #8a8a8a; }

/* block settings windows */
.window {
    position: absolute;
    padding: 0 2px;
    background: #444;
    border: 1px solid #111;
    border-radius: 6px 6px 0 0;
    box-shadow: 0 0 8px 1px #111;
}
.win-top { left: 281px; top: 65px; width: 500px; height: 210px; }
.win-sell { left: 259px; top: 265px; width: 337px; height: 400px; }
.win-candle { left: 634px; top: 201px; width: 320px; height: 400px; }
.vars {
    position: absolute;
    left: 100%;
    top: 2px;
    width: 18px;
    height: 70px;
    border: 1px solid #222;
    border-radius: 0 5px 5px 0;
    background: #555566;
    color: #ccc;
    font-size: 14px;
    line-height: 16px;
    letter-spacing: .35px;
    writing-mode: vertical-rl;
    text-align: center;
    box-shadow: 1px 1px 4px #111;
}
.titlebar {
    height: 25px;
    margin: 0 -2px 2px;
    padding-left: 4px;
    display: flex;
    align-items: center;
    border-bottom: 1px solid #000;
    border-radius: 5px 5px 0 0;
    background: linear-gradient(#2b2b2b, #333 15%, #626262 55%, #2b2b2b);
    color: #ccc;
    font-size: 13px;
    letter-spacing: .1px;
    -webkit-text-stroke: .25px #ccc;
}
.win-top .titlebar {
    margin-bottom: 1px;
}
.titlebar .x {
    width: 18px;
    height: 18px;
}
.titlebar .pin {
    width: 26px;
    height: 18px;
    margin: -1px 18px 0 4px;
}
.titlebar span {
    line-height: 22px;
}
.section {
    border: 1px solid #333322;
    border-top: 0;
    border-radius: 5px 5px 0 0;
    margin-bottom: 1px;
}
.s-money, .s-stop, .s-open, .s-limits {
    margin-bottom: 0;
}
h4 {
    margin: 0;
    height: 15px;
    border-bottom: 1px solid #3b3b2c;
    border-top: 1px solid #333322;
    border-radius: 5px 5px 0 0;
    background: linear-gradient(#43433a, #55554a);
    color: #8b8b7e;
    font: bold 10.500px/13px "DejaVu Sans", sans-serif;
    letter-spacing: -.33px;
    text-align: center;
    text-shadow: 1px 1px 1px #111;
}
h4.fold {
    border: 1px solid #333322;
    border-bottom-style: dotted;
    margin-bottom: 1px;
    background: linear-gradient(#4b4b3a, #333322);
    color: #bbbb99;
}
.row {
    height: 22px;
    display: flex;
    align-items: center;
}
.row.short { height: 21px; }
.row.tall { height: 23px; }
.row label {
    align-self: stretch;
    margin-right: auto;
    padding-left: 5px;
    display: flex;
    align-items: center;
    background: #55554c;
    color: #bbb;
    font-size: 13px;
    white-space: nowrap;
    text-shadow: 1px 1px 1px #222;
    letter-spacing: .12px;
    padding-bottom: 1px;
}
.sel, .inp {
    height: 20px;
    border: 1px solid #000;
    border-radius: 4px;
    background: #333;
    color: #ddd;
    font-size: 13px;
    line-height: 17px;
    white-space: nowrap;
}
.sel {
    padding: 0 24px 0 5px;
    position: relative;
    letter-spacing: .15px;
    -webkit-text-stroke: .2px #ddd;
}
.sel::after {
    content: "";
    position: absolute;
    right: -1px;
    top: -1px;
    width: 21px;
    height: 21px;
    border: 1px solid #000;
    background: linear-gradient(#555, #3c3c3c);
}
.sel::before {
    content: "";
    position: absolute;
    z-index: 1;
    right: 5px;
    top: 7px;
    border: 4.500px solid transparent;
    border-top: 5px solid #111;
    border-bottom: 0;
}
.inp {
    width: 27px;
    padding-left: 5px;
    -webkit-text-stroke: .2px #ddd;
}
.inp.text { width: 82px; padding-left: 4px; letter-spacing: .15px; }
.inp.focus {
    border: 2px solid #fff;
    line-height: 15px;
    padding-left: 4px;
}
.inp.focus::after {
    content: "";
    display: inline-block;
    width: 1px;
    height: 13px;
    background: #fff;
    vertical-align: -2px;
}
.chk {
    width: 13px;
    height: 13px;
    margin-left: 3px;
    border: 1px solid #222;
    border-radius: 2px;
    background: #505050;
}
.chk.faint { opacity: .2; }
.chk svg {
    display: block;
    width: 13px;
    height: 13px;
    margin: -1px;
    overflow: visible;
}
.row em {
    padding-left: 4px;
    color: #888;
    font-size: 11px;
    white-space: nowrap;
    line-height: 16px;
}
hr {
    height: 1px;
    margin: 2px 11px 3px 2px;
    border: 0;
    background: #8a8a8a;
}
.s-money hr { margin-bottom: 2px; }
.s-top label { width: 333px; }
.s-top em { width: 25px; padding-left: 3px; }
.s-money label { width: 140px; }
.s-money em { width: 23px; padding-left: 3px; }
.s-stop label { width: 177px; }
.s-stop em { width: 38px; }
.s-more label { width: 176px; }
.s-more em { width: 50px; }
.s-signal label { width: 172px; }
.s-signal em { width: 6px; }
.s-which label { width: 108px; }
.s-which em { width: 52px; }
.s-open label { width: 131px; }
.s-open em { width: 13px; padding-left: 3px; }
.s-limits label { width: 237px; }
.s-limits em { width: 27px; }
.status {
    height: 28px;
    margin-top: 5px;
    padding-left: 5px;
    display: flex;
    align-items: center;
    border: 1px solid #333322;
    background: #445555;
    color: #99aaaa;
    font-size: 13px;
    letter-spacing: .1px;
    padding-bottom: 2px;
    -webkit-text-stroke: .4px #99aaaa;
}
.box {
    width: 12px;
    height: 12px;
    margin: 0 11px 0 19px;
    background: #fff;
    border-radius: 2px;
}
.field {
    width: 55px;
    height: 19px;
    border: 1px solid #000;
    border-radius: 3px;
    background: #666;
}
.buttons {
    display: flex;
    gap: 49px;
    padding: 5px 0 0 24px;
}
.buttons span {
    width: 211px;
    height: 20px;
    border: 1px solid #111;
    border-radius: 5px 5px 0 0;
    background: linear-gradient(#555, #3d3d3d);
    text-align: center;
    font-size: 13px;
    line-height: 18px;
}
.green {
    color: #2a9d2a;
    -webkit-text-stroke: .4px #2a9d2a;
}
.wrench {
    position: absolute;
    left: 1028px;
    top: 2px;
    width: 52px;
    height: 52px;
    border: 2px solid #333;
    border-radius: 6px;
    background: linear-gradient(#686868, #999);
}

/* taskbar */
.taskbar {
    height: 40px;
    display: flex;
    align-items: center;
    flex-shrink: 0;
    border-top: 1px solid #c9d6e0;
    background: linear-gradient(rgba(255,255,255,.25), rgba(0,20,50,.35) 40%, rgba(0,0,0,0) 80%),
        linear-gradient(90deg, #1e6096, #3b98d4 200px, #3b98d4 480px, #1f67ab 650px, #1b5ea6 1100px, #123d74 1250px, #123d74);
}
.start {
    width: 38px;
    height: 38px;
    margin: 0 26px 0 8px;
}
.ti {
    width: 34px;
    height: 34px;
    margin-right: 28px;
}
.task {
    width: 58px;
    height: 38px;
    margin-right: 4px;
    border: 1px solid #1c4d77;
    border-radius: 3px;
    box-shadow: inset 0 0 0 1px rgba(255,255,255,.6);
    background: linear-gradient(135deg, rgba(255,255,255,.55), rgba(255,255,255,.15) 60%);
    display: flex;
    align-items: center;
    justify-content: center;
}
.task svg {
    width: 32px;
    height: 32px;
}
.task.current {
    background: linear-gradient(135deg, rgba(255,255,255,.8), rgba(255,255,255,.6));
}
.ti + .task {
    margin-left: -12px;
}
.tray {
    margin-left: auto;
    display: flex;
    align-items: center;
    gap: 8px;
}
.flag {
    margin-left: 3px;
}
.clock {
    width: 68px;
    margin-left: -1px;
    color: #fff;
    font: 11.500px/17px "Open Sans", sans-serif;
    letter-spacing: -.2px;
    text-align: center;
}
.peek {
    width: 14px;
    height: 38px;
    margin-left: -5px;
    border: 1px solid #7c93ad;
    background: linear-gradient(#365a84, #0d2c55);
}
```
